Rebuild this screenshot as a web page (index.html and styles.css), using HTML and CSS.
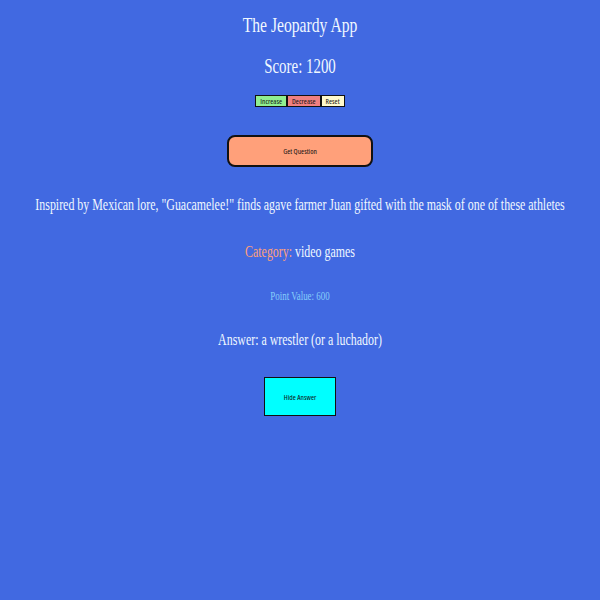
FILE: index.html
```html
<!DOCTYPE html>
<html>
<head>
<meta charset="utf-8">
<link rel="stylesheet" href="styles.css">
</head>
<body>
<div class="app">
  <h1 class="title narrow">The Jeopardy App</h1>
  <h2 class="score narrow">Score: 1200</h2>
  <div class="score-buttons">
    <button class="btn-small inc">Increase</button><button class="btn-small dec">Decrease</button><button class="btn-small reset">Reset</button>
  </div>
  <button class="get-question">Get Question</button>
  <p class="question narrow">Inspired by Mexican lore, "Guacamelee!" finds agave farmer Juan gifted with the mask of one of these athletes</p>
  <p class="category narrow"><span class="cat-label">Category:</span>&nbsp;video games</p>
  <p class="points narrow">Point Value: 600</p>
  <p class="answer narrow">Answer: a wrestler (or a luchador)</p>
  <button class="hide-answer">Hide Answer</button>
</div>
</body>
</html>
```
FILE: styles.css
```css
html, body {
  margin: 0;
  padding: 0;
  background: #4169e1;
}
.app {
  display: flex;
  flex-direction: column;
  align-items: center;
  font-family: "Liberation Serif", serif;
  color: #f0f8ff;
  padding-top: 12px;
}
.narrow {
  display: flex;
  justify-content: center;
  width: 100%;
  white-space: nowrap;
  transform: scaleX(0.745);
}
.title {
  font-size: 21px;
  font-weight: normal;
  margin: 0;
  line-height: 26px;
}
.score {
  font-size: 20px;
  font-weight: normal;
  margin: 15px 0 0;
  line-height: 26px;
}
.score-buttons {
  margin-top: 16px;
  display: flex;
}
.btn-small,
.get-question,
.hide-answer {
  font-family: "Open Sans", "Liberation Sans", sans-serif;
  font-stretch: 75%;
  color: #111;
}
.btn-small {
  font-size: 7.5px;
  height: 12px;
  padding: 0 4px;
  border: 1px solid #111;
  line-height: 10px;
}
.inc { background: #90ee90; }
.dec { background: #f08080; }
.reset { background: #fffacd; }
.get-question {
  margin-top: 28px;
  width: 146px;
  height: 32px;
  background: #ffa07a;
  border: 2px solid #111;
  border-radius: 8px;
  font-size: 7.5px;
}
.question {
  margin: 28px 0 0;
  font-size: 16px;
  line-height: 20px;
}
.category {
  margin: 27px 0 0;
  font-size: 16px;
  line-height: 20px;
}
.cat-label { color: #ffa07a; }
.points {
  margin: 27px 0 0;
  font-size: 12px;
  line-height: 14px;
  color: #87cefa;
}
.answer {
  margin: 27px 0 0;
  font-size: 16px;
  line-height: 20px;
}
.hide-answer {
  margin-top: 27px;
  width: 72px;
  height: 39px;
  background: #00ffff;
  border: 1px solid #111;
  font-size: 7.5px;
}
```
